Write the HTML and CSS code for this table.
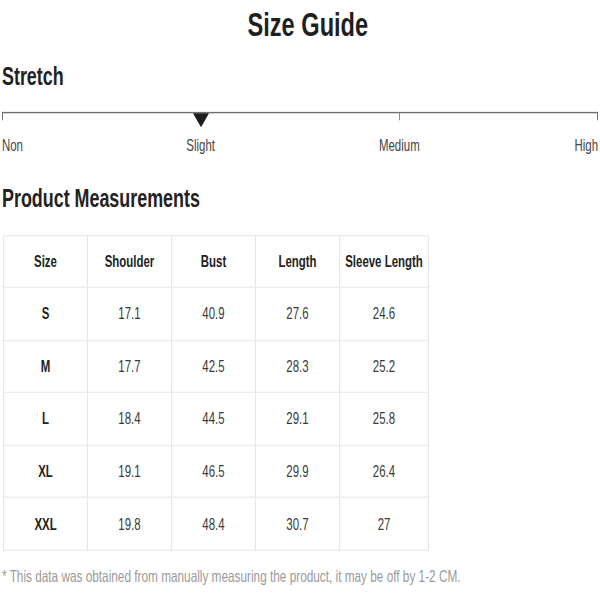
FILE: index.html
```html
<!DOCTYPE html>
<html lang="en">
<head>
<meta charset="utf-8">
<title>Size Guide</title>
<link rel="stylesheet" href="styles.css">
</head>
<body>
<div class="page">
  <h1 class="title">Size Guide</h1>

  <h2 class="section-title stretch-title">Stretch</h2>
  <div class="scale">
    <div class="scale-line">
      <div class="seg seg-first"></div>
      <div class="seg seg-mid"><span class="marker"></span></div>
      <div class="seg seg-last"></div>
    </div>
    <div class="scale-labels">
      <span class="lbl lbl-non">Non</span>
      <span class="lbl lbl-slight">Slight</span>
      <span class="lbl lbl-medium">Medium</span>
      <span class="lbl lbl-high">High</span>
    </div>
  </div>

  <h2 class="section-title measure-title">Product Measurements</h2>
  <div class="table">
    <div class="cell head">Size</div>
    <div class="cell head">Shoulder</div>
    <div class="cell head">Bust</div>
    <div class="cell head">Length</div>
    <div class="cell head">Sleeve Length</div>

    <div class="cell size">S</div>
    <div class="cell">17.1</div>
    <div class="cell">40.9</div>
    <div class="cell">27.6</div>
    <div class="cell">24.6</div>

    <div class="cell size">M</div>
    <div class="cell">17.7</div>
    <div class="cell">42.5</div>
    <div class="cell">28.3</div>
    <div class="cell">25.2</div>

    <div class="cell size">L</div>
    <div class="cell">18.4</div>
    <div class="cell">44.5</div>
    <div class="cell">29.1</div>
    <div class="cell">25.8</div>

    <div class="cell size">XL</div>
    <div class="cell">19.1</div>
    <div class="cell">46.5</div>
    <div class="cell">29.9</div>
    <div class="cell">26.4</div>

    <div class="cell size">XXL</div>
    <div class="cell">19.8</div>
    <div class="cell">48.4</div>
    <div class="cell">30.7</div>
    <div class="cell">27</div>
  </div>

  <p class="note">* This data was obtained from manually measuring the product, it may be off by 1-2 CM.</p>
</div>
</body>
</html>
```

FILE: styles.css
```css
html, body {
  margin: 0;
  padding: 0;
  background: #fff;
}

html {
  min-height: 600px;
}

body {
  min-height: 600px;
  font-family: "Liberation Sans", Arial, sans-serif;
  color: #333;
}

/* The sheet uses tall, condensed lettering: the layout is drawn
   at 1/1.4 height and stretched vertically. */
.page {
  width: 600px;
  height: 429px;
  box-sizing: border-box;
  padding: 0 2px;
  transform: scaleY(1.3986);
  transform-origin: 0 0;
}

.title {
  margin: 0;
  padding: 4.3px 0 0 15.7px;
  font-size: 23.6px;
  line-height: 28.6px;
  font-weight: bold;
  text-align: center;
  color: #1f1f1f;
}

.section-title {
  margin: 0;
  font-size: 17.9px;
  line-height: 20px;
  font-weight: bold;
  color: #222;
}

.stretch-title {
  margin-top: 11.8px;
}

.scale {
  margin-top: 15px;
}

.scale-line {
  display: grid;
  grid-template-columns: 1fr 1fr 1fr;
}

.seg {
  height: 6.45px;
  border-top: 1.43px solid #6f6f6f;
  box-sizing: border-box;
  position: relative;
}

.seg-first {
  border-left: 1.5px solid #6f6f6f;
}

.seg-last {
  border-left: 1.5px solid #8a8a8a;
  border-right: 1.5px solid #6f6f6f;
}

.marker {
  position: absolute;
  left: -8px;
  top: 0;
  width: 0;
  height: 0;
  border-left: 8px solid transparent;
  border-right: 8px solid transparent;
  border-top: 10.7px solid #1d1d1d;
}

.scale-labels {
  margin-top: 10.7px;
  display: grid;
  grid-template-columns: repeat(6, 1fr);
  font-size: 11.44px;
  line-height: 14.3px;
  color: #444;
}

.lbl-non { grid-column: 1; text-align: left; }
.lbl-slight { grid-column: 2 / span 2; text-align: center; }
.lbl-medium { grid-column: 4 / span 2; text-align: center; }
.lbl-high { grid-column: 6; text-align: right; }

.measure-title {
  margin-top: 20.6px;
}

.table {
  margin-top: 15.9px;
  margin-left: 1px;
  display: grid;
  grid-template-columns: 84px 84px 84px 84px 89px;
  grid-auto-rows: 37.54px;
  width: max-content;
  border-top: 0.72px solid #ececec;
  border-left: 1px solid #e6e6e6;
}

.cell {
  display: flex;
  align-items: center;
  justify-content: center;
  border-right: 1px solid #e6e6e6;
  border-bottom: 0.72px solid #ececec;
  font-size: 11.44px;
  color: #3a3a3a;
  white-space: nowrap;
}

.cell.head,
.cell.size {
  font-weight: bold;
  color: #222;
}

.note {
  margin: 12.1px 0 0 0;
  font-size: 11.8px;
  line-height: 12.9px;
  color: #9a9a9a;
  white-space: nowrap;
}
```
